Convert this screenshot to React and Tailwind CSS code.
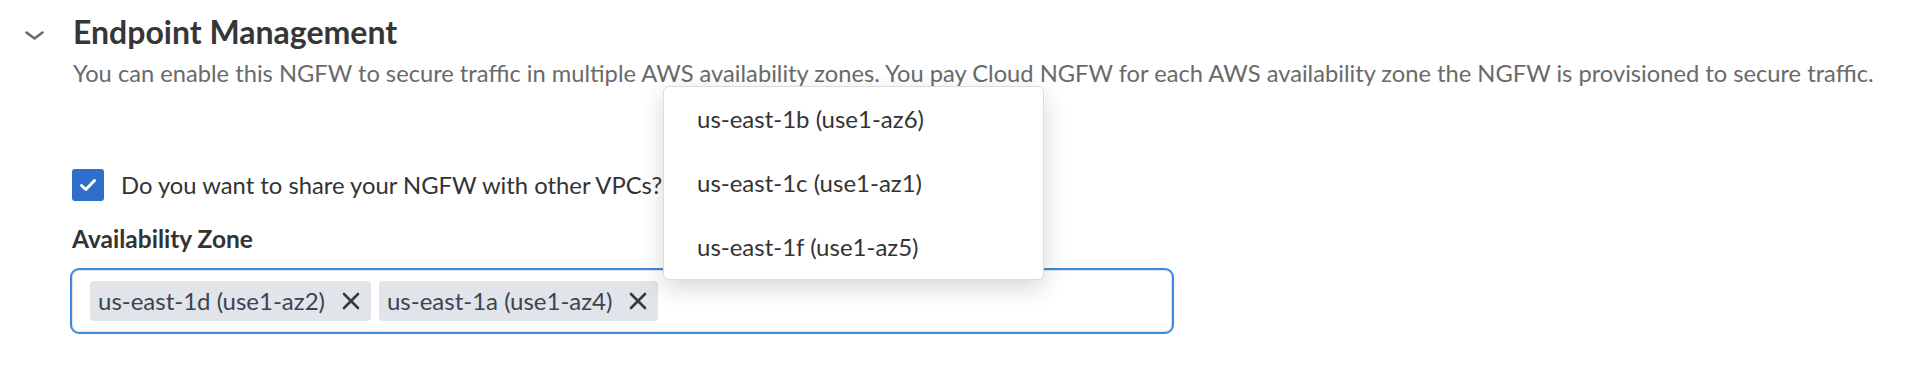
import React from "react";

function XIcon() {
  return (
    <svg width="18" height="18" viewBox="0 0 18 18" fill="none">
      <path d="M2 2 L16 16 M16 2 L2 16" stroke="#333a44" strokeWidth="2.6" strokeLinecap="round" />
    </svg>
  );
}

function Chip({ label }) {
  return (
    <div className="flex items-center h-[40px] rounded-[4px] bg-[#e1e5e9] pl-[8px] pr-[11px] gap-[17px]">
      <span className="text-[24px] leading-none text-[#3a4454]">{label}</span>
      <XIcon />
    </div>
  );
}

export default function App() {
  const options = ["us-east-1b (use1-az6)", "us-east-1c (use1-az1)", "us-east-1f (use1-az5)"];
  return (
    <div className="relative w-[1910px] h-[374px] bg-white font-['Lato',sans-serif] overflow-hidden">
      <div className="flex items-start pt-[13px]">
        <div className="w-[73px] flex justify-start pl-[25px] pt-[18px]">
          <svg width="19" height="9" viewBox="0 0 19 9" fill="none">
            <path d="M1.5 1.5 L9.5 7.5 L17.5 1.5" stroke="#6b6b6b" strokeWidth="2.6" strokeLinecap="round" strokeLinejoin="round" />
          </svg>
        </div>
        <div className="flex flex-col gap-[8px]">
          <h2 className="text-[32px] leading-[38px] font-bold text-[#363636]">Endpoint Management</h2>
          <p className="text-[23.7px] leading-[28px] text-[#6a6a6a] whitespace-nowrap">
            You can enable this NGFW to secure traffic in multiple AWS availability zones. You pay Cloud NGFW for each AWS availability zone the NGFW is provisioned to secure traffic.
          </p>
        </div>
      </div>

      <div className="pl-[70px] pt-[82px]">
        <div className="flex items-center gap-[17px] pl-[2px]">
          <div className="w-[32px] h-[32px] rounded-[3px] bg-[#2f6fcb] flex items-center justify-center">
            <svg width="18" height="14" viewBox="0 0 18 14" fill="none">
              <path d="M2.5 7.5 L6.8 11.5 L15.5 2.5" stroke="white" strokeWidth="3" strokeLinecap="round" strokeLinejoin="round" />
            </svg>
          </div>
          <span className="text-[23.8px] leading-[29px] text-[#333]">Do you want to share your NGFW with other VPCs?</span>
        </div>

        <div className="pt-[23px] pl-[2px] text-[24.5px] leading-[29px] font-bold text-[#333]">Availability Zone</div>

        <div className="mt-[15px] w-[1104px] h-[66px] rounded-[9px] border-2 border-[#3d88e3] shadow-[inset_0_0_0_1px_#e4e4e4] px-[18px] py-[11px] flex items-center gap-[8px]">
          <Chip label="us-east-1d (use1-az2)" />
          <Chip label="us-east-1a (use1-az4)" />
        </div>
      </div>

      <div className="absolute left-[663px] top-[86px] w-[381px] rounded-[6px] border border-[#dcdcdc] bg-white shadow-[0_8px_24px_rgba(0,0,0,0.16)]">
        {options.map((o) => (
          <div key={o} className="h-[64px] flex items-center pl-[33px] text-[24px] text-[#333]">
            {o}
          </div>
        ))}
      </div>
    </div>
  );
}
